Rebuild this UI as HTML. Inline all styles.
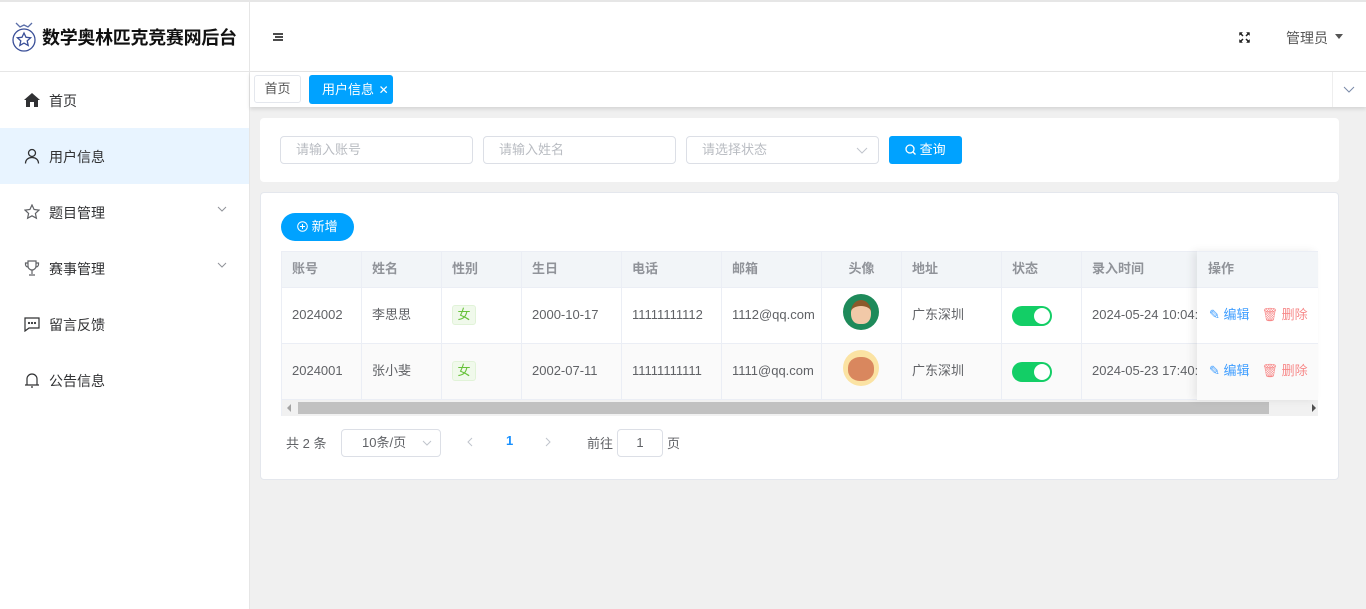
<!DOCTYPE html>
<html><head><meta charset="utf-8"><style>
*{box-sizing:border-box;margin:0;padding:0}
body{width:1366px;height:609px;overflow:hidden;background:#f0f0f0;font-family:"Liberation Sans","Noto Sans CJK SC",sans-serif;font-size:13px;color:#606266;position:relative}
.a{position:absolute}
.side{left:0;top:0;width:250px;height:609px;background:#fff;border-right:1px solid #e6e6e6;border-top:2px solid #e6e6e6}
.logo{left:0;top:2px;width:249px;height:70px;border-bottom:1px solid #e6e6e6}
.mi{left:0;width:249px;height:56px;font-size:14px;color:#303133}
.mi span{position:absolute;left:49px;top:19px}
.mi svg{position:absolute;left:24px;top:20px}
.hdr{left:250px;top:0;width:1116px;height:72px;background:#fff;border-top:2px solid #e6e6e6;border-bottom:1px solid #e6e6e6}
.tabs{left:250px;top:72px;width:1116px;height:35px;background:#fff;box-shadow:0 2px 4px rgba(0,0,0,.12)}
.card{background:#fff;border:1px solid #e4e7ed;border-radius:4px}
.inp{height:28px;border:1px solid #dcdfe6;border-radius:4px;color:#b9bcc2;padding:0 15px;line-height:26px;font-size:13px}
.th,.td{position:absolute;border-right:1px solid #ebeef5;border-bottom:1px solid #ebeef5;padding-left:10px}
.th{top:0;height:36px;line-height:34px;background:#f2f5f8;color:#909399;font-weight:bold}
.td{height:56px;line-height:53px}
.tag{display:inline-block;width:24px;height:20px;line-height:18px;text-align:center;background:#f0f9eb;border:1px solid #e1f3d8;color:#67c23a;border-radius:3px;font-size:13px}
.sw{display:inline-block;position:relative;width:40px;height:20px;background:#13ce66;border-radius:10px;vertical-align:middle}
.sw:after{content:"";position:absolute;right:2px;top:2px;width:16px;height:16px;border-radius:50%;background:#fff}
</style></head><body>
<div class="a side"></div>
<div class="a logo">
<svg class="a" style="left:11px;top:18px" width="26" height="34" viewBox="0 0 26 34"><path d="M5 3l4 4 4-2 4 2 4-4" fill="none" stroke="#5a6ea8" stroke-width="1.3"/><circle cx="13" cy="20" r="11" fill="none" stroke="#3a4f98" stroke-width="1.3"/><path d="M13 13l2 4.3 4.6.5-3.4 3.1 1 4.6-4.2-2.4-4.2 2.4 1-4.6-3.4-3.1 4.6-.5z" fill="none" stroke="#3a4f98" stroke-width="1.3"/></svg>
<div class="a" style="left:42px;top:22px;font-size:18px;font-weight:bold;color:#111;white-space:nowrap;letter-spacing:-0.3px">数学奥林匹克竞赛网后台</div>
</div>
<div class="a mi" style="top:72px"><svg width="16" height="16" viewBox="0 0 16 16"><path d="M8 1L0 8h2v7h4v-5h4v5h4V8h2z" fill="#303133"/></svg><span>首页</span></div>
<div class="a mi" style="top:128px;background:#e8f4ff"><svg width="16" height="16" viewBox="0 0 16 16" fill="none" stroke="#303133" stroke-width="1.3"><circle cx="8" cy="5" r="3.5"/><path d="M1.5 15.5c0-4 3-6 6.5-6s6.5 2 6.5 6"/></svg><span>用户信息</span></div>
<div class="a mi" style="top:184px"><svg width="16" height="16" viewBox="0 0 16 16" fill="none" stroke="#606266" stroke-width="1.2"><path d="M8 1l2.1 4.5 4.9.6-3.6 3.3 1 4.8L8 11.8l-4.4 2.4 1-4.8L1 6.1l4.9-.6z"/></svg><span>题目管理</span><svg style="left:217px;top:22px" width="10" height="6" viewBox="0 0 10 6"><path d="M1 1l4 4 4-4" fill="none" stroke="#909399"/></svg></div>
<div class="a mi" style="top:240px"><svg width="16" height="16" viewBox="0 0 16 16" fill="none" stroke="#606266" stroke-width="1.2"><path d="M4 1h8v5a4 4 0 0 1-8 0zM4 3H1.5v1.5a2.5 2.5 0 0 0 2.7 2.5M12 3h2.5v1.5a2.5 2.5 0 0 1-2.7 2.5M8 10v4M5 15h6"/></svg><span>赛事管理</span><svg style="left:217px;top:22px" width="10" height="6" viewBox="0 0 10 6"><path d="M1 1l4 4 4-4" fill="none" stroke="#909399"/></svg></div>
<div class="a mi" style="top:296px"><svg width="16" height="16" viewBox="0 0 16 16" fill="none" stroke="#303133" stroke-width="1.2"><path d="M1 2h14v10H5l-4 3z"/><circle cx="5" cy="7" r=".5" fill="#303133"/><circle cx="8" cy="7" r=".5" fill="#303133"/><circle cx="11" cy="7" r=".5" fill="#303133"/></svg><span>留言反馈</span></div>
<div class="a mi" style="top:352px"><svg width="16" height="16" viewBox="0 0 16 16" fill="none" stroke="#303133" stroke-width="1.2"><path d="M3 13V7a5 5 0 0 1 10 0v6M1 13h14M7 15h2"/></svg><span>公告信息</span></div>

<div class="a hdr"></div>
<svg class="a" style="left:273px;top:33px" width="10" height="8" viewBox="0 0 10 8" stroke="#111" stroke-width="1.4"><path d="M0 1h10M2 4h8M0 7h10"/></svg>
<svg class="a" style="left:1239px;top:32px" width="11" height="11" viewBox="0 0 11 11" stroke="#222" stroke-width="1.5" fill="#222"><path d="M4 4L1.5 1.5M7 4l2.5-2.5M4 7L1.5 9.5M7 7l2.5 2.5"/><path d="M0.5 0.5h3l-3 3zM10.5 0.5h-3l3 3zM0.5 10.5h3l-3-3zM10.5 10.5h-3l3-3z" stroke-width="0.5"/></svg>
<div class="a" style="left:1286px;top:28px;font-size:14px;color:#555">管理员</div>
<div class="a" style="left:1335px;top:34px;width:0;height:0;border-left:4px solid transparent;border-right:4px solid transparent;border-top:5px solid #555"></div>

<div class="a tabs"></div>
<div class="a" style="left:254px;top:75px;width:47px;height:28px;border:1px solid #e4e7ed;border-radius:3px;line-height:26px;text-align:center;color:#555">首页</div>
<div class="a" style="left:309px;top:75px;width:84px;height:29px;background:#00a2ff;border-radius:3px;line-height:29px;color:#fff;padding-left:13px">用户信息 <span style="font-size:12px;margin-left:1px">✕</span></div>
<div class="a" style="left:1332px;top:72px;width:34px;height:35px;background:#fff;border-left:1px solid #eee"></div>
<svg class="a" style="left:1343px;top:86px" width="12" height="7" viewBox="0 0 12 7"><path d="M1 1l5 5 5-5" fill="none" stroke="#7a8aa8"/></svg>

<div class="a card" style="left:260px;top:118px;width:1079px;height:64px;border:none"></div>
<div class="a inp" style="left:280px;top:136px;width:193px">请输入账号</div>
<div class="a inp" style="left:483px;top:136px;width:193px">请输入姓名</div>
<div class="a inp" style="left:686px;top:136px;width:193px">请选择状态<svg style="position:absolute;right:10px;top:10px" width="12" height="7" viewBox="0 0 12 7"><path d="M1 1l5 5 5-5" fill="none" stroke="#c0c4cc"/></svg></div>
<div class="a" style="left:889px;top:136px;width:73px;height:28px;background:#00a2ff;border-radius:3px;color:#fff;line-height:27px;padding-left:16px"><svg style="vertical-align:-1px" width="11" height="11" viewBox="0 0 11 11" fill="none" stroke="#fff" stroke-width="1.3"><circle cx="5" cy="5" r="4"/><path d="M8 8l2.5 2.5"/></svg> 查询</div>

<div class="a card" style="left:260px;top:192px;width:1079px;height:288px"></div>
<div class="a" style="left:281px;top:213px;width:73px;height:28px;background:#00a2ff;border-radius:14px;color:#fff;line-height:27px;padding-left:16px"><svg style="vertical-align:-1px" width="11" height="11" viewBox="0 0 11 11" fill="none" stroke="#fff"><circle cx="5.5" cy="5.5" r="4.8"/><path d="M5.5 3v5M3 5.5h5"/></svg> 新增</div>

<div class="a" style="left:281px;top:251px;width:1037px;height:165px;overflow:hidden;border-top:1px solid #ebeef5;border-left:1px solid #ebeef5">
<div class="th" style="left:0;width:80px">账号</div><div class="th" style="left:80px;width:80px">姓名</div><div class="th" style="left:160px;width:80px">性别</div><div class="th" style="left:240px;width:100px">生日</div><div class="th" style="left:340px;width:100px">电话</div><div class="th" style="left:440px;width:100px">邮箱</div><div class="th" style="left:540px;width:80px;text-align:center;padding:0">头像</div><div class="th" style="left:620px;width:100px">地址</div><div class="th" style="left:720px;width:80px">状态</div><div class="th" style="left:800px;width:240px">录入时间</div>
<div style="position:absolute;left:0;top:36px;width:1040px;height:56px;background:#fff">
<div class="td" style="left:0;width:80px">2024002</div><div class="td" style="left:80px;width:80px">李思思</div><div class="td" style="left:160px;width:80px"><span class="tag">女</span></div><div class="td" style="left:240px;width:100px">2000-10-17</div><div class="td" style="left:340px;width:100px">11111111112</div><div class="td" style="left:440px;width:100px">1112@qq.com</div><div class="td" style="left:540px;width:80px"><div style="position:absolute;left:21px;top:6px;width:36px;height:36px;border-radius:50%;background:#1e8a5a"><div style="margin:6px auto;width:20px;height:24px;border-radius:50% 50% 40% 40%;background:#f2c9a8;border-top:6px solid #8b5a2b"></div></div></div><div class="td" style="left:620px;width:100px">广东深圳</div><div class="td" style="left:720px;width:80px"><span class="sw"></span></div><div class="td" style="left:800px;width:240px">2024-05-24 10:04:06</div></div>
<div style="position:absolute;left:0;top:92px;width:1040px;height:56px;background:#fafafa">
<div class="td" style="left:0;width:80px">2024001</div><div class="td" style="left:80px;width:80px">张小斐</div><div class="td" style="left:160px;width:80px"><span class="tag">女</span></div><div class="td" style="left:240px;width:100px">2002-07-11</div><div class="td" style="left:340px;width:100px">11111111111</div><div class="td" style="left:440px;width:100px">1111@qq.com</div><div class="td" style="left:540px;width:80px"><div style="position:absolute;left:21px;top:6px;width:36px;height:36px;border-radius:50%;background:#fbe3a3"><div style="margin:7px auto;width:26px;height:24px;border-radius:45%;background:#d9875e"></div></div></div><div class="td" style="left:620px;width:100px">广东深圳</div><div class="td" style="left:720px;width:80px"><span class="sw"></span></div><div class="td" style="left:800px;width:240px">2024-05-23 17:40:13</div></div>
<div style="position:absolute;left:0;top:148px;width:1037px;height:16px;background:#f1f1f1"><div style="position:absolute;left:16px;top:2px;width:971px;height:12px;background:#c1c1c1"></div><div style="position:absolute;left:5px;top:4px;border-right:4px solid #a3a3a3;border-top:4px solid transparent;border-bottom:4px solid transparent"></div><div style="position:absolute;right:3px;top:4px;border-left:4px solid #505050;border-top:4px solid transparent;border-bottom:4px solid transparent"></div></div>
</div>
<div class="a" style="left:1197px;top:251px;width:121px;height:149px;background:#fff;box-shadow:-4px 0 8px rgba(0,0,0,.08);border-top:1px solid #ebeef5">
<div style="height:36px;line-height:34px;background:#f2f5f8;color:#909399;font-weight:bold;padding-left:11px;border-bottom:1px solid #ebeef5">操作</div>
<div style="height:56px;line-height:53px;padding-left:12px;border-bottom:1px solid #ebeef5"><span style="color:#409eff">✎ 编辑</span><span style="color:#f78989;margin-left:12px">🗑︎ 删除</span></div>
<div style="height:56px;line-height:53px;padding-left:12px;background:#fafafa"><span style="color:#409eff">✎ 编辑</span><span style="color:#f78989;margin-left:12px">🗑︎ 删除</span></div>
</div>

<div class="a" style="left:286px;top:433px">共 2 条</div>
<div class="a inp" style="left:341px;top:429px;width:100px;color:#606266;padding-left:20px">10条/页<svg style="position:absolute;right:8px;top:10px" width="10" height="6" viewBox="0 0 10 6"><path d="M1 1l4 4 4-4" fill="none" stroke="#c0c4cc"/></svg></div>
<svg class="a" style="left:467px;top:437px" width="6" height="10" viewBox="0 0 6 10"><path d="M5 1L1 5l4 4" fill="none" stroke="#c0c4cc"/></svg>
<div class="a" style="left:506px;top:433px;color:#1890ff;font-weight:bold">1</div>
<svg class="a" style="left:545px;top:437px" width="6" height="10" viewBox="0 0 6 10"><path d="M1 1l4 4-4 4" fill="none" stroke="#c0c4cc"/></svg>
<div class="a" style="left:587px;top:433px">前往</div>
<div class="a inp" style="left:617px;top:429px;width:46px;color:#606266;text-align:center;padding:0">1</div>
<div class="a" style="left:667px;top:433px">页</div>
</body></html>
